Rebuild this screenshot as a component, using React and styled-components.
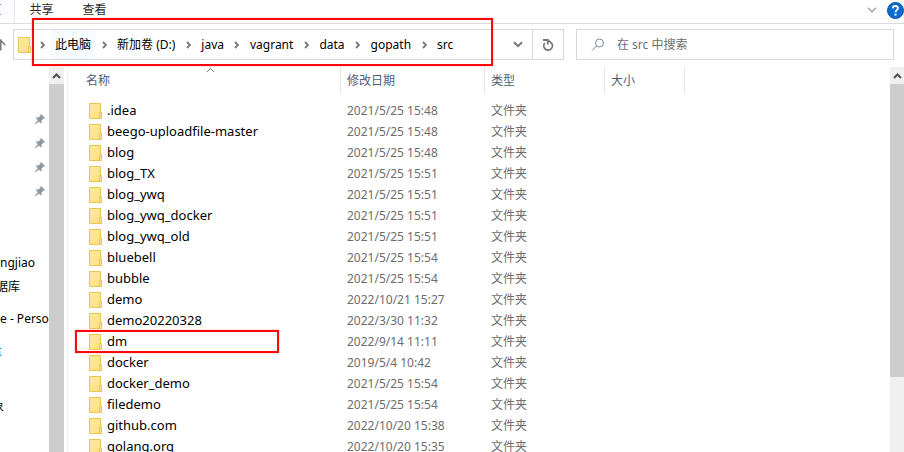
import React from 'react';
import styled, { createGlobalStyle } from 'styled-components';

const GlobalStyle = createGlobalStyle`
  * { box-sizing: border-box; }
  html, body { margin: 0; height: 100%; }
  #root { height: 100%; }
  body {
    background: #fff;
    color: #000;
    overflow: hidden;
    font-family: "Noto Sans", "Noto Sans CJK SC", sans-serif;
    font-size: 12px;
    line-height: 21px;
  }
  button, input { font: inherit; color: inherit; margin: 0; padding: 0; border: 0; background: none; }
  a { color: inherit; text-decoration: none; }
`;

const Window = styled.main`
  display: flex;
  flex-direction: column;
  height: 100vh;
  overflow: hidden;
`;

const RibbonTabs = styled.nav`
  display: flex;
  flex: none;
  align-items: center;
  height: 24px;
  border-bottom: 1px solid #dadbdc;
`;

const ActiveTabEdge = styled.span`
  width: 15px;
  height: 23px;
  border-right: 1px solid #e8e9ea;
  background: #fdfdff;
`;

const ActiveTabMark = styled.span`
  display: block;
  width: 1px;
  height: 11px;
  margin-top: 4px;
  border-top: 1px solid #5da0dc;
  border-bottom: 1px solid #5da0dc;
`;

const Tab = styled.button`
  width: 53px;
  height: 20px;
  margin-bottom: 3px;
  line-height: 20px;
  color: #2b2b2b;
`;

const RibbonTools = styled.div`
  display: flex;
  align-items: center;
  gap: 10px;
  height: 20px;
  margin-left: auto;
  margin-bottom: 3px;
`;

const IconButton = styled.button`
  display: flex;
  align-items: center;
  justify-content: center;
`;

const AddressRow = styled.div`
  display: grid;
  flex: none;
  grid-template-columns: minmax(0, 564fr) minmax(0, 318fr);
  align-items: center;
  gap: 12px;
  height: 43px;
  padding-right: 10px;
  padding-bottom: 2px;
`;

const LocationGroup = styled.div`
  display: flex;
  align-items: center;
`;

const UpButton = styled(IconButton)`
  flex: none;
  width: 13px;
  height: 31px;
  justify-content: flex-start;
`;

const AddressBar = styled.div`
  position: relative;
  display: flex;
  flex: 1;
  align-items: center;
  height: 31px;
  min-width: 0;
  border: 1px solid #d9d9d9;
`;

const AddressIcon = styled.span`
  display: flex;
  width: 19px;
  padding-left: 4px;
`;

const Crumbs = styled.ol`
  display: flex;
  flex: 1;
  height: 29px;
  margin: 0;
  padding: 0;
  list-style: none;
  white-space: nowrap;
`;

const Crumb = styled.li`
  display: flex;
  align-items: center;
`;

const CrumbArrow = styled.span`
  display: flex;
  justify-content: center;
  width: 18px;
`;

const CrumbLink = styled.a`
  padding: 0 4px;
  line-height: 29px;
  background: ${(p) => (p.$tinted ? '#f7fbff' : 'none')};
`;

const AddressAction = styled(IconButton)`
  width: ${(p) => (p.$divided ? 31 : 28)}px;
  height: 29px;
  border-left: ${(p) => (p.$divided ? '1px solid #d9d9d9' : '0')};
`;

const Highlight = styled.span`
  position: absolute;
  pointer-events: none;
  border: 2px solid #fb0808;
  box-shadow: 0 0 1px #fb6060;
  inset: ${(p) => p.$inset};
`;

const SearchBox = styled.label`
  display: flex;
  align-items: center;
  gap: 12px;
  height: 31px;
  padding-left: 14px;
  border: 1px solid #d9d9d9;
`;

const SearchInput = styled.input`
  flex: 1;
  min-width: 0;
  outline: none;
  &::placeholder { color: #6d6d6d; opacity: 1; }
`;

const Body = styled.div`
  display: flex;
  flex: 1;
  min-height: 0;
`;

const NavPane = styled.aside`
  display: flex;
  flex: none;
  width: 49px;
  flex-direction: column;
  overflow: hidden;
  white-space: nowrap;
`;

const PinList = styled.div`
  display: flex;
  flex-direction: column;
  padding-top: 40px;
  margin-bottom: 47px;
`;

const PinRow = styled(IconButton)`
  justify-content: flex-end;
  height: 24px;
  padding-right: 4px;
`;

const NavItem = styled.a`
  display: flex;
  align-items: center;
  flex: none;
  height: 24px;
  margin-top: ${(p) => p.$gap || 0}px;
  margin-left: ${(p) => -(p.$cut || 0)}px;
  color: ${(p) => p.$color || '#000'};
`;

const ScrollBar = styled.div`
  display: flex;
  flex: none;
  flex-direction: column;
  width: ${(p) => p.$width}px;
  background: #f0f0f0;
`;

const ScrollButton = styled(IconButton)`
  flex: none;
  height: 17px;
`;

const ScrollThumb = styled.div`
  flex: 0 1 ${(p) => p.$size};
  background: #cdcdcd;
`;

const FilePane = styled.section`
  flex: 1;
  min-width: 0;
  margin-left: 3px;
  padding-left: 7px;
  border-left: 1px solid #f3f3f3;
  overflow: hidden;
`;

const FileTable = styled.table`
  width: 100%;
  table-layout: fixed;
  border-collapse: separate;
  border-spacing: 0;
`;

const HeadCell = styled.th`
  position: relative;
  width: ${(p) => (p.$width ? p.$width + 'px' : 'auto')};
  height: 27px;
  padding: 0 0 0 ${(p) => p.$pad || 6}px;
  border-right: ${(p) => (p.$width ? '1px solid #e5e5e5' : '0')};
  font-weight: 400;
  text-align: left;
  color: #4c607a;
`;

const SortMark = styled.span`
  position: absolute;
  top: 0;
  left: 0;
  right: 0;
  display: flex;
  justify-content: center;
  padding-left: 6px;
`;

const Spacer = styled.tbody`
  &::before { content: ""; display: block; height: 6px; }
`;

const Cell = styled.td`
  position: relative;
  height: 21px;
  padding: 0 0 0 6px;
  color: #6d6d6d;
  white-space: nowrap;
`;

const NameCell = styled(Cell)`
  padding-left: 14px;
`;

const FileLink = styled.a`
  display: flex;
  align-items: center;
  gap: 5px;
  color: #000;
  font-size: 13px;
`;

const FolderIcon = () => (
  <svg width="13" height="16" viewBox="0 0 13 16" aria-hidden="true">
    <defs>
      <linearGradient id="folder" x1="0" y1="0" x2="1" y2="1">
        <stop offset="0" stopColor="#ffeaa4" />
        <stop offset="1" stopColor="#fddf7c" />
      </linearGradient>
    </defs>
    <path d="M.5.5h11v9h1v6H.5z" fill="url(#folder)" stroke="#e9c554" />
    <path d="M10.500 15.500v-6h2v6z" fill="#fde28a" stroke="#e9c554" />
  </svg>
);

const Chevron = ({ d, w, h, color = '#777', stroke = 1.8 }) => (
  <svg width={w} height={h} viewBox={`0 0 ${w} ${h}`} fill="none" stroke={color} strokeWidth={stroke} aria-hidden="true">
    <path d={d} />
  </svg>
);

const PinIcon = () => (
  <svg width="10" height="10" viewBox="0 0 10 10" fill="#8d98a1" aria-hidden="true">
    <path d="M6 0l4 4-.8.8-.7-.2-2 2.200.1 1.700-.8.9-2-2L.7 10H0v-.7l2.800-3L.9 4.200l.8-.8 1.800.1 2-2L5.300.7z" />
  </svg>
);

const crumbs = ['此电脑', '新加卷 (D:)', 'java', 'vagrant', 'data', 'gopath', 'src'];

const files = [
  ['.idea', '2021/5/25 15:48'],
  ['beego-uploadfile-master', '2021/5/25 15:48'],
  ['blog', '2021/5/25 15:48'],
  ['blog_TX', '2021/5/25 15:51'],
  ['blog_ywq', '2021/5/25 15:51'],
  ['blog_ywq_docker', '2021/5/25 15:51'],
  ['blog_ywq_old', '2021/5/25 15:51'],
  ['bluebell', '2021/5/25 15:54'],
  ['bubble', '2021/5/25 15:54'],
  ['demo', '2022/10/21 15:27'],
  ['demo20220328', '2022/3/30 11:32'],
  ['dm', '2022/9/14 11:11'],
  ['docker', '2019/5/4 10:42'],
  ['docker_demo', '2021/5/25 15:54'],
  ['filedemo', '2021/5/25 15:54'],
  ['github.com', '2022/10/20 15:38'],
  ['golang.org', '2022/10/20 15:35'],
];

export default function App() {
  return (
    <Window>
      <GlobalStyle />
      <RibbonTabs>
        <ActiveTabEdge><ActiveTabMark /></ActiveTabEdge>
        <Tab>共享</Tab>
        <Tab>查看</Tab>
        <RibbonTools>
          <IconButton aria-label="展开功能区">
            <Chevron w={10} h={6} d="M1 .8l4 4 4-4" color="#a6a6a6" stroke={1.5} />
          </IconButton>
          <IconButton aria-label="帮助">
            <svg width="17" height="17" viewBox="0 0 17 17" aria-hidden="true">
              <circle cx="8.500" cy="8.500" r="8" fill="#0a6cce" stroke="#0a4f9e" />
              <path d="M5.800 6.400C5.900 3.200 11 3.300 10.900 6.200C10.800 8 8.600 8 8.500 10.300" fill="none" stroke="#fff" strokeWidth="1.900" />
              <path d="M7.500 11.600h2v2h-2z" fill="#fff" />
            </svg>
          </IconButton>
        </RibbonTools>
      </RibbonTabs>
      <AddressRow>
        <LocationGroup>
          <UpButton aria-label="上移">
            <svg width="6" height="14" viewBox="0 0 6 14" fill="none" stroke="#808080" strokeWidth="1.600" aria-hidden="true">
              <path d="M.8 1.500v11M0 1.500l5.200 5.500" />
            </svg>
          </UpButton>
          <AddressBar>
            <AddressIcon><FolderIcon /></AddressIcon>
            <Crumbs>
              {crumbs.map((name, index) => (
                <Crumb key={name}>
                  <CrumbArrow><Chevron w={5} h={8} d="M1 1l3 3-3 3" /></CrumbArrow>
                  <CrumbLink href="#" $tinted={index === 0}>{name}</CrumbLink>
                </Crumb>
              ))}
            </Crumbs>
            <AddressAction aria-label="以前的位置">
              <Chevron w={10} h={7} d="M1 1.200l4 4 4-4" stroke={2} />
            </AddressAction>
            <AddressAction $divided aria-label="刷新">
              <svg width="12" height="13" viewBox="0 0 12 13" fill="none" stroke="#777" strokeWidth="1.800" aria-hidden="true">
                <path d="M2.800 5A4.300 4.300 0 1 0 9 4.600Q8 3.200 5.800 2.500M1 2h4.800v4.500" />
              </svg>
            </AddressAction>
            <Highlight $inset="-12px 70px -7px 18px" />
          </AddressBar>
        </LocationGroup>
        <SearchBox>
          <svg width="14" height="14" viewBox="0 0 14 14" fill="none" stroke="#7d8790" aria-hidden="true">
            <circle cx="8.500" cy="5" r="4" />
            <path d="M5.500 8L1 12.500" />
          </svg>
          <SearchInput type="text" placeholder="在 src 中搜索" aria-label="在 src 中搜索" />
        </SearchBox>
      </AddressRow>
      <Body>
        <NavPane>
          <PinList>
            {[0, 1, 2, 3].map((n) => (
              <PinRow key={n} aria-label="取消固定"><PinIcon /></PinRow>
            ))}
          </PinList>
          <NavItem href="#">ngjiao</NavItem>
          <NavItem href="#" $cut={4}>据库</NavItem>
          <NavItem href="#" $gap={8}>e - Perso</NavItem>
          <NavItem href="#" $gap={8} $cut={10} $color="#1592c4">盘</NavItem>
          <NavItem href="#" $gap={32} $cut={8}>象</NavItem>
        </NavPane>
        <ScrollBar $width={15}>
          <ScrollButton aria-label="向上滚动"><Chevron w={9} h={6} d="M1 5l3.500-3.500L8 5" color="#505050" stroke={2} /></ScrollButton>
          <ScrollThumb $size="100%" />
        </ScrollBar>
        <FilePane>
          <FileTable>
            <thead>
              <tr>
                <HeadCell $width={266} $pad={11}>
                  名称
                  <SortMark><Chevron w={9} h={6} d="M1 5l3.500-3.500L8 5" stroke={1} /></SortMark>
                </HeadCell>
                <HeadCell $width={144}>修改日期</HeadCell>
                <HeadCell $width={120}>类型</HeadCell>
                <HeadCell $width={80}>大小</HeadCell>
                <HeadCell />
              </tr>
            </thead>
            <Spacer />
            <tbody>
              {files.map(([name, date]) => (
                <tr key={name}>
                  <NameCell>
                    <FileLink href="#"><FolderIcon />{name}</FileLink>
                    {name === 'dm' && <Highlight $inset="-1px 62px -1px 0" />}
                  </NameCell>
                  <Cell>{date}</Cell>
                  <Cell>文件夹</Cell>
                  <Cell />
                  <Cell />
                </tr>
              ))}
            </tbody>
          </FileTable>
        </FilePane>
        <ScrollBar $width={14}>
          <ScrollButton aria-label="向上滚动"><Chevron w={9} h={6} d="M1 5l3.500-3.500L8 5" color="#505050" stroke={2} /></ScrollButton>
          <ScrollThumb $size="76%" />
        </ScrollBar>
      </Body>
    </Window>
  );
}
